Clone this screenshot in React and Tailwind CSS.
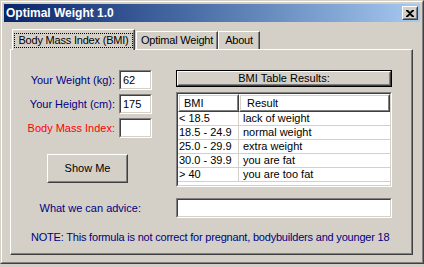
import React from 'react';

const rows = [
    ['< 18.5', 'lack of weight'],
    ['18.5 - 24.9', 'normal weight'],
    ['25.0 - 29.9', 'extra weight'],
    ['30.0 - 39.9', 'you are fat'],
    ['> 40', 'you are too fat'],
];

function Sunken({ className = '', children }) {
    return (
        <div className={`border border-t-[#808080] border-l-[#808080] border-b-white border-r-white ${className}`}>
            <div className="h-full w-full border border-t-[#404040] border-l-[#404040] border-b-[#d4d0c8] border-r-[#d4d0c8] bg-white">
                {children}
            </div>
        </div>
    );
}

function Raised({ className = '', children }) {
    return (
        <div className={`border border-t-white border-l-white border-b-[#404040] border-r-[#404040] ${className}`}>
            <div className="h-full w-full border border-t-[#d4d0c8] border-l-[#d4d0c8] border-b-[#808080] border-r-[#808080] flex items-center justify-center">
                {children}
            </div>
        </div>
    );
}

function Field({ label, value, red }) {
    return (
        <div className="flex items-center h-[20px]">
            <span className={`w-[104px] text-right ${red ? 'text-[#ff0000]' : 'text-[#000080]'}`}>{label}</span>
            <Sunken className="ml-[4px] w-[33px] h-[20px]">
                <div className="pl-[2px] pt-[2px] leading-[13px] text-black">{value}</div>
            </Sunken>
        </div>
    );
}

export default function App() {
    return (
        <div className="w-[424px] h-[267px] bg-[#d4d0c8] font-['Liberation_Sans',Arial,sans-serif] text-[11px] leading-[13px] text-black">
            <div className="w-[424px] h-[264px] border border-t-[#d4d0c8] border-l-[#d4d0c8] border-b-[#404040] border-r-[#404040]">
                <div className="h-full border border-t-white border-l-white border-b-[#808080] border-r-[#808080] p-[2px]">
                    {/* title bar */}
                    <div className="h-[18px] flex items-center bg-gradient-to-r from-[#0a246a] to-[#a6caf0] pl-[2px] pr-[2px]">
                        <span className="text-white font-bold text-[12px]">Optimal Weight 1.0</span>
                        <Raised className="ml-auto w-[16px] h-[14px] bg-[#d4d0c8]">
                            <svg width="8" height="7" viewBox="0 0 8 7">
                                <path d="M0 0h2l2 2 2-2h2v1L5 3.5 8 6v1H6L4 5 2 7H0V6l3-2.5L0 1z" fill="black" />
                            </svg>
                        </Raised>
                    </div>

                    {/* tabs */}
                    <div className="pl-[6px] pt-[7px]">
                        <div className="flex items-end h-[20px] pl-[2px] tracking-[-0.2px]">
                            <div className="relative z-10 h-[21px] mb-[-1px] w-[123px] bg-[#d4d0c8] border-l border-t border-white border-r border-r-[#404040] shadow-[inset_-1px_0_#808080] flex items-center justify-center">
                                <span className="border border-dotted border-black px-[3px] leading-[13px]">Body Mass Index (BMI)</span>
                            </div>
                            <div className="ml-[1px] h-[18px] w-[82px] border-l border-t border-white border-r border-r-[#404040] shadow-[inset_-1px_0_#808080] flex items-center justify-center">
                                Optimal Weight
                            </div>
                            <div className="h-[18px] w-[42px] border-l border-t border-white border-r border-r-[#404040] shadow-[inset_-1px_0_#808080] flex items-center justify-center">
                                About
                            </div>
                        </div>

                        {/* panel */}
                        <div className="w-[403px] h-[206px] border border-t-white border-l-white border-b-[#404040] border-r-[#404040] shadow-[inset_-1px_-1px_#808080] pt-[20px]">
                            <div className="flex">
                                <div className="w-[165px] flex flex-col gap-[4px]">
                                    <Field label="Your Weight (kg):" value="62" />
                                    <Field label="Your Height (cm):" value="175" />
                                    <Field label="Body Mass Index:" value="" red />
                                    <Raised className="mt-[12px] ml-[36px] w-[81px] h-[29px]">
                                        <span>Show Me</span>
                                    </Raised>
                                </div>

                                <div className="w-[216px]">
                                    <div className="border border-black h-[17px]">
                                        <Raised className="h-full">
                                            <span>BMI Table Results:</span>
                                        </Raised>
                                    </div>
                                    <Sunken className="mt-[5px] h-[95px]">
                                        <div className="grid grid-cols-[61px_1fr]">
                                            <Raised className="h-[18px]">
                                                <span className="w-full pl-[4px]">BMI</span>
                                            </Raised>
                                            <Raised className="h-[18px]">
                                                <span className="w-full pl-[6px]">Result</span>
                                            </Raised>
                                            {rows.map(([bmi, res]) => (
                                                <React.Fragment key={bmi}>
                                                    <div className="h-[14px] border-b border-b-[#d4d0c8] border-r border-r-[#d4d0c8] pl-[1px] leading-[13px]">{bmi}</div>
                                                    <div className="h-[14px] border-b border-b-[#d4d0c8] pl-[4px] leading-[13px]">{res}</div>
                                                </React.Fragment>
                                            ))}
                                        </div>
                                    </Sunken>
                                </div>
                            </div>

                            <div className="flex items-center mt-[11px] h-[20px]">
                                <span className="w-[130px] text-right text-[#000080]">What we can advice:</span>
                                <Sunken className="ml-[35px] w-[216px] h-[20px]" />
                            </div>

                            <div className="mt-[13px] pl-[20px] text-[#000080] tracking-[-0.2px]">
                                NOTE: This formula is not correct for pregnant, bodybuilders and younger 18
                            </div>
                        </div>
                    </div>
                </div>
            </div>
        </div>
    );
}
